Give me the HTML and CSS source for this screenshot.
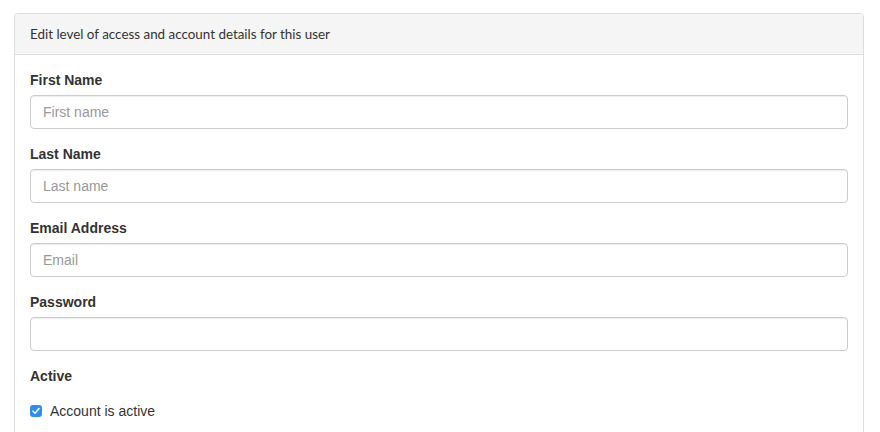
FILE: index.html
```html
<!DOCTYPE html>
<html>
<head>
<meta charset="utf-8">
<link rel="stylesheet" href="styles.css">
</head>
<body>
<div class="panel">
  <div class="panel-heading">Edit level of access and account details for this user</div>
  <div class="panel-body">
    <div class="form-group">
      <label class="lbl">First Name</label>
      <input class="form-control" type="text" placeholder="First name">
    </div>
    <div class="form-group">
      <label class="lbl">Last Name</label>
      <input class="form-control" type="text" placeholder="Last name">
    </div>
    <div class="form-group">
      <label class="lbl">Email Address</label>
      <input class="form-control" type="text" placeholder="Email">
    </div>
    <div class="form-group">
      <label class="lbl">Password</label>
      <input class="form-control" type="password">
    </div>
    <div class="form-group">
      <label class="lbl">Active</label>
      <div class="checkbox">
        <span class="cb"><svg width="12" height="12" viewBox="0 0 12 12"><path d="M3 6.2 L5 8.2 L9 3.6" fill="none" stroke="#fff" stroke-width="1.6" stroke-linecap="round" stroke-linejoin="round"/></svg></span>
        <span class="cb-text">Account is active</span>
      </div>
    </div>
  </div>
</div>
</body>
</html>
```
FILE: styles.css
```css
* { box-sizing: border-box; }
html, body { margin: 0; padding: 0; background: #fff; }
body {
  padding: 13px 16px 0 14px;
  font-family: "Liberation Sans", Arial, sans-serif;
  font-size: 14px;
  line-height: 20px;
  color: #333;
}
.panel {
  border: 1px solid #ddd;
  border-radius: 4px;
  height: 440px;
  overflow: hidden;
}
.panel-heading {
  background: #f5f5f5;
  border-bottom: 1px solid #ddd;
  padding: 10px 15px;
  font-family: Lato, "Open Sans", sans-serif;
  font-size: 13.4px;
  line-height: 20px;
  color: #333;
}
.panel-body { padding: 15px; }
.form-group { margin-bottom: 15px; }
.lbl {
  display: inline-block;
  font-weight: bold;
  margin-bottom: 5px;
}
.form-control {
  display: block;
  width: 100%;
  height: 34px;
  padding: 6px 12px;
  font-family: "Liberation Sans", Arial, sans-serif;
  font-size: 14px;
  line-height: 20px;
  color: #555;
  background: #fff;
  border: 1px solid #ccc;
  border-radius: 4px;
  box-shadow: inset 0 1px 1px rgba(0,0,0,0.075);
  outline: none;
}
.form-control::placeholder { color: #999; }
.checkbox {
  margin-top: 10px;
  display: flex;
  align-items: center;
  height: 20px;
}
.cb {
  width: 12px;
  height: 12px;
  border-radius: 3px;
  background: #2f8cf4;
  display: inline-flex;
  margin-right: 8px;
}
.cb svg { display: block; }
```
